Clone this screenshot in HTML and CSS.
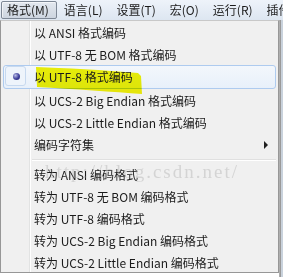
FILE: index.html
```html
<!DOCTYPE html>
<html lang="zh-CN">
<head>
    <meta charset="UTF-8">
    <title>格式菜单</title>
    <link rel="stylesheet" href="styles.css">
</head>
<body>
    <div class="screen">
        <div class="menubar">
            <span class="menubar-item active">格式(M)</span>
            <span class="menubar-item">语言(L)</span>
            <span class="menubar-item">设置(T)</span>
            <span class="menubar-item">宏(O)</span>
            <span class="menubar-item">运行(R)</span>
            <span class="menubar-item">插件</span>
        </div>

        <div class="popup-row">
            <div class="popup">
                <div class="item">以 ANSI 格式编码</div>
                <div class="item">以 UTF-8 无 BOM 格式编码</div>
                <div class="item hover checked">
                    <span class="check"><span class="bullet"></span></span>
                    <span class="label">以 UTF-8 格式编码</span>
                    <svg class="marker" width="110" height="32" viewBox="0 0 110 32">
                        <path d="M2 3 C30 4 70 6 104 9 L107 12 L108 30 C80 28 40 25 3 23 Z" fill="#f4f40a"/>
                    </svg>
                </div>
                <div class="item">以 UCS-2 Big Endian 格式编码</div>
                <div class="item">以 UCS-2 Little Endian 格式编码</div>
                <div class="item submenu">编码字符集<span class="arrow"></span></div>
                <div class="separator"></div>
                <div class="item">转为 ANSI 编码格式</div>
                <div class="item">转为 UTF-8 无 BOM 编码格式</div>
                <div class="item">转为 UTF-8 编码格式</div>
                <div class="item">转为 UCS-2 Big Endian 编码格式</div>
                <div class="item">转为 UCS-2 Little Endian 编码格式</div>

                <div class="watermark">http://blog.csdn.net/</div>
            </div>
            <div class="behind"></div>
        </div>
    </div>
</body>
</html>
```

FILE: styles.css
```css
body {
    margin: 0;
    background: #ffffff;
    font-family: "Noto Sans CJK SC", "Noto Sans", sans-serif;
    font-size: 12px;
    color: #1b1b1b;
}

.screen {
    width: 283px;
    height: 277px;
    overflow: hidden;
    background: #ffffff;
}

/* --- Menu bar --- */
.menubar {
    height: 20px;
    display: flex;
    align-items: center;
    padding-left: 1px;
    background: linear-gradient(#eef3fa, #dde6f1);
    white-space: nowrap;
}

.menubar-item {
    height: 18px;
    line-height: 16px;
    padding: 0 6px;
    border: 1px solid transparent;
    border-radius: 2px;
    box-sizing: border-box;
}

.menubar-item.active {
    padding: 0 7px 0 5px;
    border-color: #7d8795;
    background: linear-gradient(#e3e8ef, #cdd5e0);
    box-shadow: inset 1px 1px 0 rgba(255, 255, 255, 0.6);
}

/* --- Popup --- */
.popup-row {
    display: flex;
    height: 257px;
}

.popup {
    position: relative;
    width: 279px;
    height: 253px;
    box-sizing: border-box;
    padding: 1px 2px;
    border: 1px solid #979797;
    border-top-color: #c8c8c8;
    background:
        linear-gradient(90deg, transparent 28px, #e2e3e3 28px, #e2e3e3 29px, #ffffff 29px, #ffffff 30px, transparent 30px),
        #f0f0f0;
}

.behind {
    width: 4px;
    background: linear-gradient(90deg, #b9b9b9, #8f8f8f 2px, #c9d2dc 2px);
}

.item {
    position: relative;
    height: 22px;
    line-height: 21px;
    padding-left: 31px;
    white-space: nowrap;
}

.item.hover {
    border: 1px solid #aecbef;
    border-radius: 3px;
    margin: -1px 0 1px 0;
    background: linear-gradient(#f3f7fc, #e8f0fa);
    padding-left: 30px;
}

.check {
    position: absolute;
    left: 1px;
    top: 0;
    width: 21px;
    height: 20px;
    box-sizing: border-box;
    border: 1px solid #c7d9ef;
    border-radius: 3px;
    background: #eef4fb;
}

.bullet {
    position: absolute;
    left: 7px;
    top: 6px;
    width: 7px;
    height: 7px;
    border-radius: 50%;
    background: radial-gradient(circle at 35% 35%, #b9bde6, #3c3e9a 55%, #23246b);
}

.label {
    position: relative;
    z-index: 2;
}

.marker {
    position: absolute;
    left: 30px;
    top: -2px;
    z-index: 1;
    mix-blend-mode: multiply;
}

.arrow {
    position: absolute;
    right: 8px;
    top: 7px;
    width: 0;
    height: 0;
    border-top: 4px solid transparent;
    border-bottom: 4px solid transparent;
    border-left: 4px solid #202020;
}

.separator {
    height: 1px;
    margin: 3px 0 3px 29px;
    background: #e0e0e0;
    border-bottom: 1px solid #ffffff;
}

.watermark {
    position: absolute;
    left: 44px;
    top: 140px;
    font-family: "Liberation Serif", serif;
    font-size: 19px;
    letter-spacing: 2px;
    color: rgba(150, 150, 150, 0.3);
    pointer-events: none;
    z-index: 3;
}
```
